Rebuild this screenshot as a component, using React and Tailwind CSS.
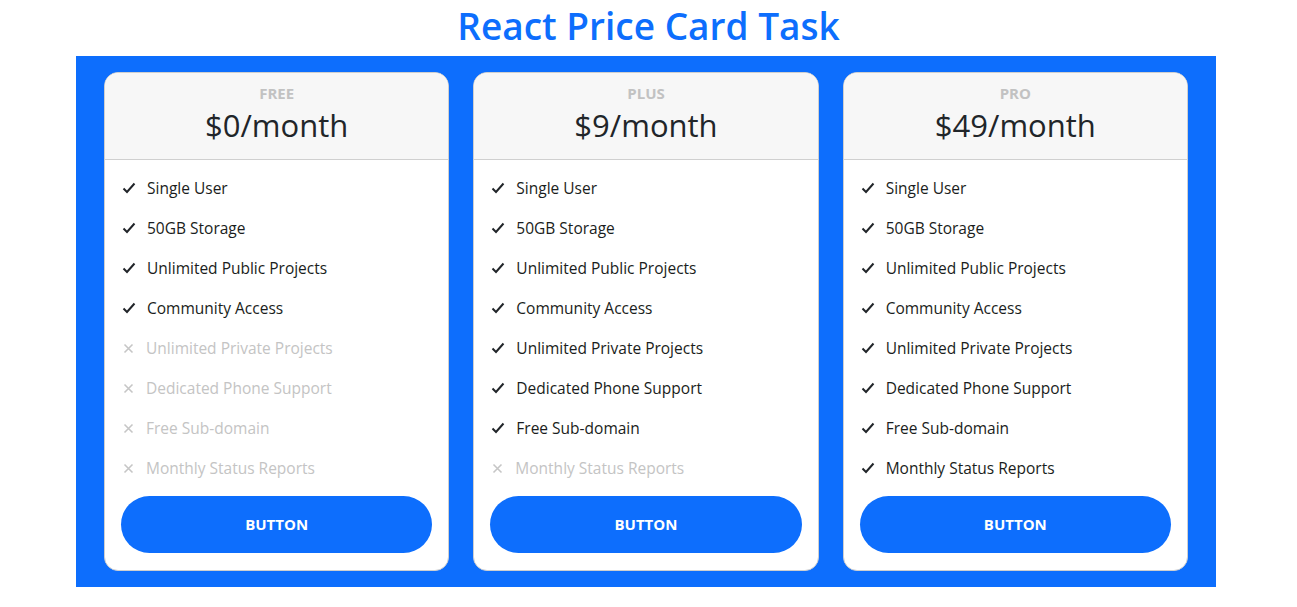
import React from "react";

const features = [
  "Single User",
  "50GB Storage",
  "Unlimited Public Projects",
  "Community Access",
  "Unlimited Private Projects",
  "Dedicated Phone Support",
  "Free Sub-domain",
  "Monthly Status Reports",
];

const plans = [
  { name: "FREE", price: "$0", included: 4 },
  { name: "PLUS", price: "$9", included: 7 },
  { name: "PRO", price: "$49", included: 8 },
];

function CheckIcon() {
  return (
    <svg width="14" height="12" viewBox="0 0 14 12" className="shrink-0">
      <polyline points="1.5,6.5 5,10 12.5,1.5" fill="none" stroke="#212529" strokeWidth="2" />
    </svg>
  );
}

function XIcon() {
  return (
    <svg width="11" height="11" viewBox="0 0 11 11" className="shrink-0">
      <path d="M1.5 1.5 L9.5 9.5 M9.5 1.5 L1.5 9.5" stroke="#c6c6c6" strokeWidth="1.6" />
    </svg>
  );
}

function PriceCard({ plan }) {
  return (
    <div className="flex-1 bg-white border border-[#cfcfcf] rounded-[14px] overflow-hidden flex flex-col">
      <div className="bg-[#f7f7f7] border-b border-[#d0d0d0] h-[87px] flex flex-col items-center pt-[11px]">
        <div className="text-[15px] font-bold text-[#c2c2c2] leading-[18px]">{plan.name}</div>
        <div className="text-[31px] text-[#212529] leading-[40px] mt-[3px]">{plan.price}/month</div>
      </div>
      <ul className="px-[17px] pt-[18px]">
        {features.map((f, i) => {
          const ok = i < plan.included;
          return (
            <li key={f} className="h-[40px] flex items-start">
              {ok ? (
                <span className="w-[25px] pt-[4px] flex">
                  <CheckIcon />
                </span>
              ) : (
                <span className="w-[24px] pl-[1px] pt-[5px] flex">
                  <XIcon />
                </span>
              )}
              <span className={`text-[15.5px] leading-[20px] ${ok ? "text-[#1a1d20]" : "text-[#c4c4c4]"}`}>
                {f}
              </span>
            </li>
          );
        })}
      </ul>
      <div className="px-[16px] pb-[17px] -mt-[2px]">
        <button className="w-full h-[57px] rounded-full bg-[#0d6efd] text-white font-bold text-[15px]">
          BUTTON
        </button>
      </div>
    </div>
  );
}

export default function App() {
  return (
    <div className="bg-white min-h-screen font-['Open_Sans',sans-serif]">
      <h1 className="text-center text-[#0d6efd] text-[37px] leading-[52px] font-semibold">
        React Price Card Task
      </h1>
      <div className="ml-[76px] w-[1140px] bg-[#0d6efd] mt-[4px] px-[28px] py-[16px] flex gap-[24px]">
        {plans.map((p) => (
          <PriceCard key={p.name} plan={p} />
        ))}
      </div>
    </div>
  );
}
